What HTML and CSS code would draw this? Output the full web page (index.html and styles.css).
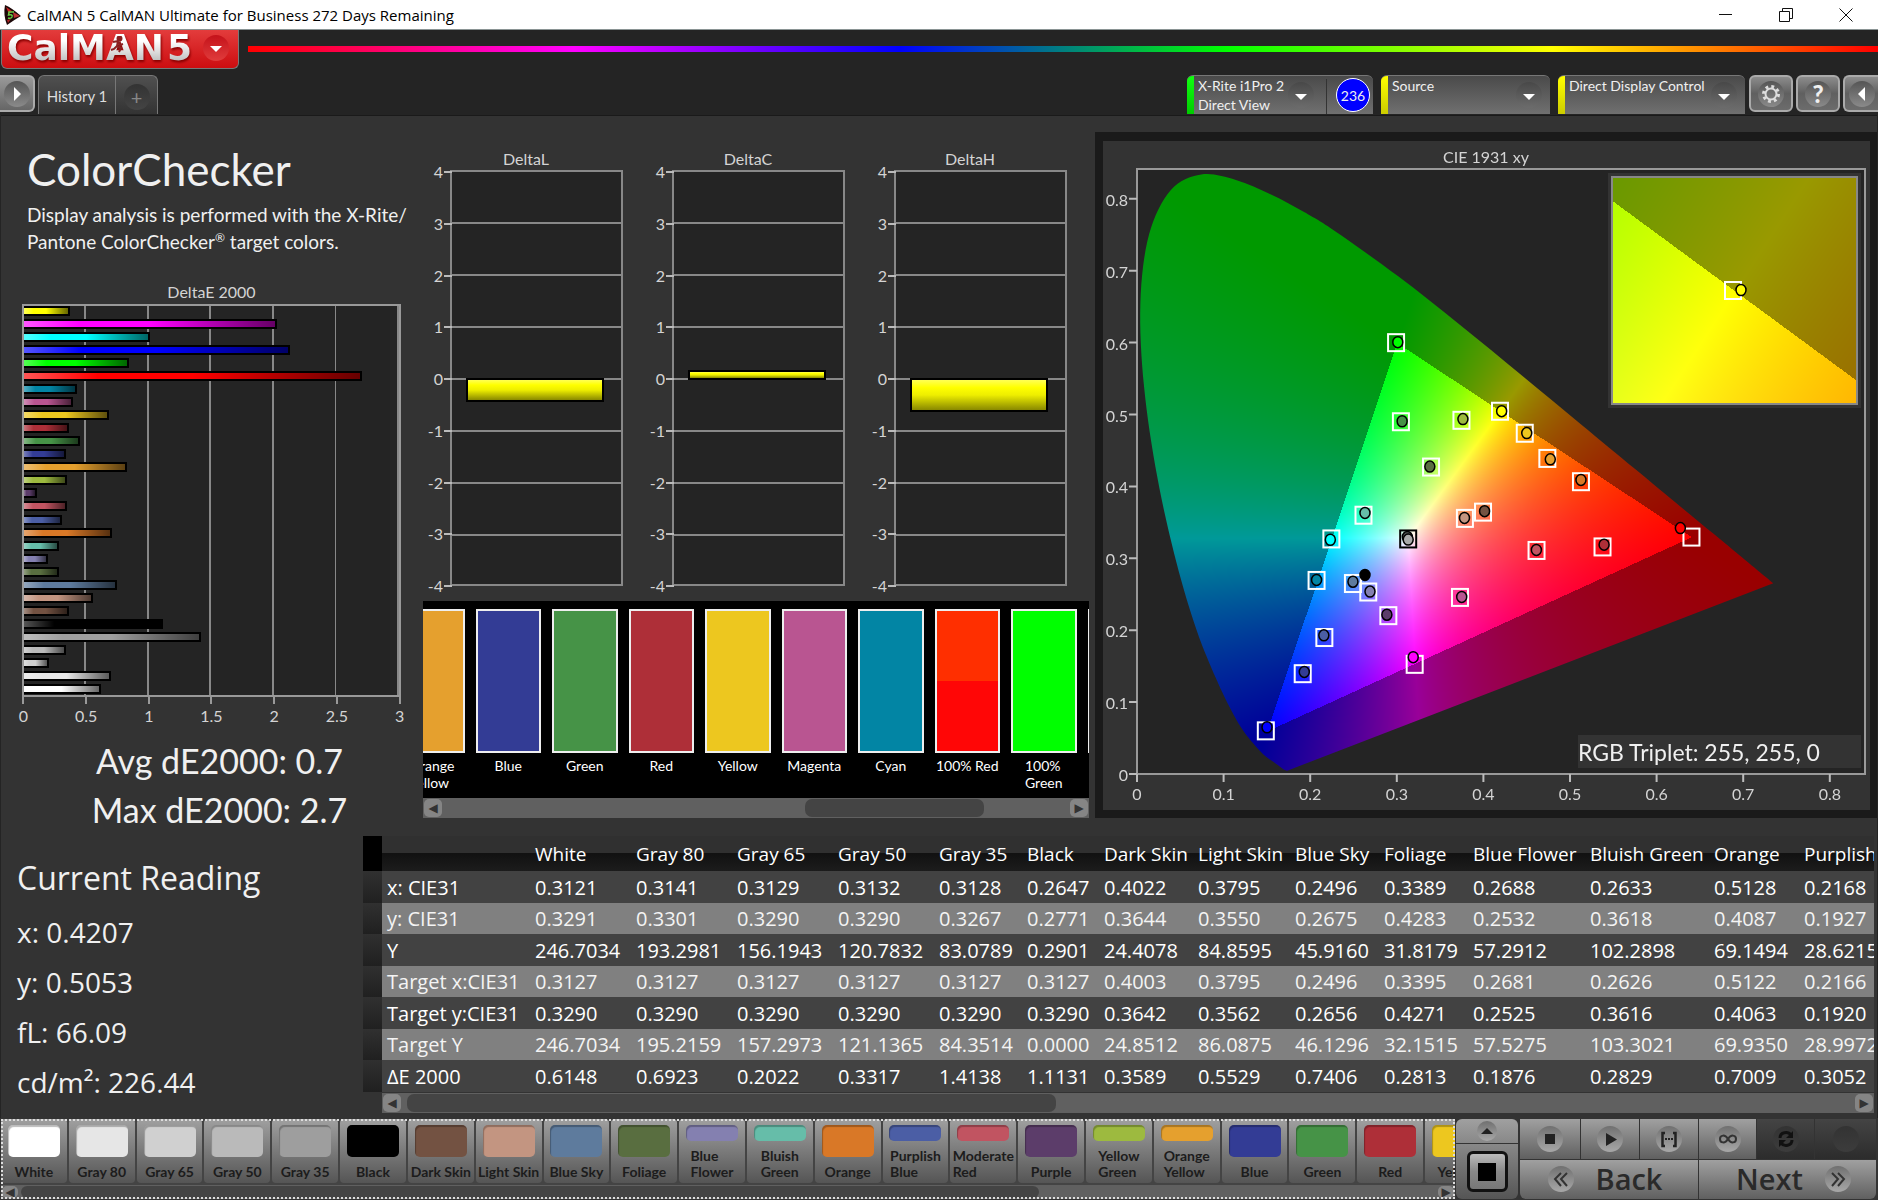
FILE: index.html
```html
<!DOCTYPE html>
<html lang="en">
<head>
<meta charset="utf-8">
<title>CalMAN 5</title>
<link rel="stylesheet" href="styles.css">
</head>
<body>
<div class="titlebar">
  <svg class="app-icon" viewBox="0 0 20 20" aria-hidden="true"><path d="M2 0Q9 3 18 11Q11 15 4 20Q0 10 2 0Z" fill="#1c0808"/><path d="M3 2L9 6L6 9Z" fill="#c22"/><path d="M10 7L17 11L11 13Z" fill="#b33"/><path d="M4 15L8 14L5 18Z" fill="#a22"/><path d="M11 7H6L5.500 10Q10 9 9 12Q8 14 5 13" stroke="#6c4" stroke-width="1.500" fill="none"/></svg>
  <span class="app-title">CalMAN 5 CalMAN Ultimate for Business 272 Days Remaining</span>
  <div class="win-buttons">
    <button aria-label="Minimize"><svg viewBox="0 0 14 14"><path d="M0 6.500H13" /></svg></button>
    <button aria-label="Restore"><svg viewBox="0 0 14 14"><path d="M.5 3.500H10.500V13.500H.5ZM3.500 3.500V.5H13.500V10.500H10.500"/></svg></button>
    <button aria-label="Close"><svg viewBox="0 0 14 14"><path d="M.5 .5L13.500 13.500M13.500 .5L.5 13.500"/></svg></button>
  </div>
</div>

<header>
  <div class="brand-row">
    <button class="logo"><span class="logo-text">CalMAN<svg class="runner" viewBox="0 0 14 18" aria-hidden="true"><circle cx="9.500" cy="2.500" r="2"/><path d="M3 6L8 5L7 10L11 12L9 16M7 10L4 13L1 14M8 6L10 9L13 8"/></svg></span><span class="logo-text">5</span><span class="orb red"><svg viewBox="0 0 26 26"><path d="M7 11H19L13 17Z"/></svg></span></button>
    <div class="rainbow"></div>
  </div>
  <div class="tab-row">
    <button class="square edge-left" aria-label="Open panel"><span class="orb"><svg viewBox="0 0 26 26"><path d="M10 6L17 13L10 20Z"/></svg></span></button>
    <div class="history"><button class="tab">History 1</button><button class="tab add" aria-label="Add history"><span class="orb dark">+</span></button></div>
    <div class="devices">
      <button class="device meter"><i class="flag green"></i><span>X-Rite i1Pro 2<br>Direct View</span><span class="orb dim"><svg viewBox="0 0 26 26"><path d="M7 12H19L13 18Z"/></svg></span><i class="rule"></i><b class="count">236</b></button>
      <button class="device source"><i class="flag"></i><span>Source</span><span class="orb dim"><svg viewBox="0 0 26 26"><path d="M7 12H19L13 18Z"/></svg></span></button>
      <button class="device display"><i class="flag"></i><span>Direct Display Control</span><span class="orb dim"><svg viewBox="0 0 26 26"><path d="M7 12H19L13 18Z"/></svg></span></button>
      <div class="tools">
        <button class="square" aria-label="Settings"><span class="orb"><svg viewBox="0 0 26 26"><g fill="none" stroke="#ddd"><circle cx="13" cy="13" r="5.500" stroke-width="2"/><circle cx="13" cy="13" r="7.500" stroke-width="3" stroke-dasharray="2.900 3"/></g></svg></span></button>
        <button class="square help" aria-label="Help"><span class="orb">?</span></button>
        <button class="square edge-right" aria-label="Collapse"><span class="orb"><svg viewBox="0 0 26 26"><path d="M16 6L9 13L16 20Z"/></svg></span></button>
      </div>
    </div>
  </div>
</header>

<main>
  <div class="analysis">
    <section class="summary">
      <h1>ColorChecker</h1>
      <p class="about">Display analysis is performed with the X-Rite/<br>Pantone ColorChecker<sup>®</sup> target colors.</p>
      <h2>DeltaE 2000</h2>
      <div class="de-plot" id="de-plot"></div>
      <div class="de-axis"><span>0</span><span>0.5</span><span>1</span><span>1.5</span><span>2</span><span>2.5</span><span>3</span></div>
      <p class="stat">Avg dE2000: 0.7</p>
      <p class="stat">Max dE2000: 2.7</p>
    </section>
    <section class="middle">
      <div class="deltas" id="deltas"></div>
      <div class="strip">
        <div class="strip-view"><div class="strip-items" id="strip"></div></div>
        <div class="scroll tall"><button aria-label="Scroll left">◀</button><div class="track"><i style="margin-left:58%;width:29%"></i></div><button aria-label="Scroll right">▶</button></div>
      </div>
    </section>
    <section class="cie-frame">
      <div class="cie">
        <canvas id="gamut" width="728" height="605"></canvas>
        <canvas id="inset" width="245" height="227"></canvas>
        <svg id="cie-svg" viewBox="0 0 767 669"></svg>
      </div>
    </section>
  </div>

  <div class="readings">
    <section class="current">
      <h2>Current Reading</h2>
      <p>x: 0.4207</p><p>y: 0.5053</p><p>fL: 66.09</p><p>cd/m²: 226.44</p>
    </section>
    <section class="grid-wrap">
      <div class="grid-view"><table id="grid"></table></div>
      <div class="scroll tall grid-scroll"><button aria-label="Scroll left">◀</button><div class="track"><i style="width:45%"></i></div><button aria-label="Scroll right">▶</button></div>
    </section>
  </div>
</main>

<footer>
  <div class="palette">
    <div class="palette-view"><div class="palette-items" id="palette"></div></div>
    <div class="scroll"><button aria-label="Scroll left">◀</button><div class="track"><i style="width:72%"></i></div><button aria-label="Scroll right">▶</button></div>
  </div>
  <div class="window-mode">
    <button class="up" aria-label="Expand"><span class="orb small"><svg viewBox="0 0 20 20"><path d="M4 13L10 7L16 13Z"/></svg></span></button>
    <button class="pattern" aria-label="Pattern window"><span class="frame"><i></i></span></button>
  </div>
  <div class="transport">
    <button aria-label="Stop"><span class="orb"><svg viewBox="0 0 26 26"><path d="M8 8H18V18H8Z"/></svg></span></button>
    <button aria-label="Play"><span class="orb"><svg viewBox="0 0 26 26"><path d="M9 7L20 13.500L9 20Z"/></svg></span></button>
    <button aria-label="Range"><span class="orb"><svg viewBox="0 0 26 26"><path d="M9 7H6.500V20H9M17 7H19.500V20H17" fill="none" stroke="#222" stroke-width="2.500"/><path d="M9 12h2v2h-2zM12 12h2v2h-2zM15 12h2v2h-2z"/></svg></span></button>
    <button aria-label="Continuous"><span class="orb"><svg viewBox="0 0 26 26"><path d="M13 13C10 8 5 9 5 13S10 18 13 13S21 9 21 13S16 18 13 13Z" fill="none" stroke="#333" stroke-width="2"/></svg></span></button>
    <button class="off" aria-label="Repeat"><span class="orb"><svg viewBox="0 0 26 26"><path d="M7 12C7 6 15 5 18 9M19 14C19 20 11 21 8 17" fill="none" stroke="#111" stroke-width="3"/><path d="M20 5V12H13ZM6 21V14H13Z" fill="#111"/></svg></span></button>
    <button class="off" aria-label="Unused"><span class="orb"></span></button>
    <button class="step back"><span class="orb"><svg viewBox="0 0 26 26"><path d="M13 7L7 13L13 20M19 7L13 13L19 20" fill="none" stroke="#333" stroke-width="2"/></svg></span>Back</button>
    <button class="step next">Next<span class="orb"><svg viewBox="0 0 26 26"><path d="M7 7L13 13L7 20M13 7L19 13L13 20" fill="none" stroke="#333" stroke-width="2"/></svg></span></button>
  </div>
</footer>
<script src="app.js"></script>
</body>
</html>
```
FILE: styles.css
```css
* { box-sizing: border-box; }
body { margin: 0; min-height: 100vh; display: flex; flex-direction: column; background: #242424; color: #f0f0f0; font: 16px Lato, sans-serif; overflow-x: hidden; }
button { margin: 0; padding: 0; border: 0; background: none; color: inherit; font: inherit; }
h1, h2, p { margin: 0; font-weight: 400; }
svg { display: block; }

.titlebar { height: 30px; display: flex; align-items: center; background: #fff; border-bottom: 1px solid #8a9494; color: #000; font: 15px "Open Sans", sans-serif; }
.app-icon { width: 20px; height: 20px; margin: 0 4px 0 3px; }
.app-title { flex: 1; line-height: 30px; white-space: nowrap; }
.win-buttons { display: flex; gap: 46px; padding-right: 25px; }
.win-buttons svg { width: 14px; height: 14px; fill: none; stroke: #111; }

.brand-row { display: flex; height: 45px; align-items: flex-start; gap: 9px; }
.logo { display: flex; align-items: center; width: 238px; height: 39px; margin-left: 1px; padding: 0 9px 2px 5px; border: 1px solid #777; border-top: 0; border-radius: 0 0 6px 6px; background: linear-gradient(#e33c3c, #cc0d10); }
.logo-text { position: relative; font: bold 36px/36px "DejaVu Sans", sans-serif; background: linear-gradient(#fff 30%, #bbb 90%); background-clip: text; color: transparent; filter: drop-shadow(1px 2px 1px #800); }
.logo-text + .logo-text { margin-left: 3px; }
.runner { position: absolute; left: 103px; top: 6px; width: 14px; height: 18px; fill: #8a2020; stroke: #8a2020; stroke-width: 2px; }
.runner path { fill: none; }
.orb { display: flex; align-items: center; justify-content: center; flex: none; width: 26px; height: 26px; border-radius: 50%; background: linear-gradient(#555, #8a8a8a); }
.orb svg { width: 100%; height: 100%; fill: #fff; }
.orb.red { margin-left: auto; background: linear-gradient(#c4121a, #e03c3c); }
.orb.dim { background: linear-gradient(#484848, #6c6c6c); }
.orb.dark { background: linear-gradient(#333, #444); color: #888; font-size: 20px; }
.rainbow { flex: 1; height: 6px; margin-top: 16px; background: linear-gradient(90deg, #f00, #f0f, #00f, #0f0, #ff0, #f00); }

.tab-row { display: flex; height: 40px; align-items: flex-start; }
.square { display: flex; align-items: center; justify-content: center; width: 44px; height: 37px; border: 2px solid #aaa; border-radius: 6px; background: linear-gradient(#8c8c8c, #606060 50%, #6c6c6c); }
.edge-left { width: 35px; border-left: 0; border-radius: 0 6px 6px 0; background: linear-gradient(#999, #666); }
.edge-right { width: 35px; border-right: 0; border-radius: 6px 0 0 6px; }
.help { font-size: 24px; font-weight: 900; }
.history { display: flex; height: 39px; margin-left: 3px; border: 1px solid #777; border-bottom: 0; border-radius: 6px 6px 0 0; background: linear-gradient(#505050, #333); }
.tab { width: 76px; padding-top: 2px; font-size: 15px; color: #ddd; }
.tab.add { display: flex; justify-content: center; width: 42px; padding-top: 8px; border-left: 1px solid #777; }
.devices { display: flex; margin-left: auto; gap: 8px; }
.device { display: flex; height: 39px; border-radius: 6px 6px 0 0; overflow: hidden; background: linear-gradient(#4a4a4a, #707070); border-top: 1px solid #777; text-align: left; font-size: 14px; line-height: 19px; }
.device > span:not(.orb) { flex: 1; white-space: nowrap; padding-left: 4px; }
.device .orb { margin: 6px 8px 0 0; }
.meter { width: 186px; }
.source { width: 169px; }
.display { width: 187px; }
.flag { width: 7px; background: linear-gradient(#ff0, #cc0); }
.flag.green { background: linear-gradient(#1f1, #0c0); }
.meter .orb { margin-right: 12px; }
.rule { width: 1px; height: 36px; margin-top: 3px; background: #333; }
.count { display: flex; align-items: center; justify-content: center; width: 34px; height: 34px; margin: 2px 3px 0 9px; border: 1px solid #fff; border-radius: 50%; background: #00f; font: 14px Lato, sans-serif; }
.tools { display: flex; gap: 3px; margin-left: -4px; }

main { flex: 1; margin: 0 1px; padding-bottom: 4px; background: #333; border-top: 1px solid #1a1a1a; }
.analysis { display: grid; grid-template-columns: 421fr 673fr 782fr; }
.summary h1 { padding: 23px 0 0 26px; font-size: 44px; line-height: 60px; }
.about { padding: 2px 0 0 26px; font-size: 19px; line-height: 27px; white-space: nowrap; }
.about sup { font-size: 12px; line-height: 1px; }
h2 { color: #d4d4d4; font-size: 16px; line-height: 20px; text-align: center; }
.summary h2 { margin-top: 27px; }
.de-plot { height: 393px; margin: 2px 21px 0 21px; padding-bottom: 1px; border: 2px solid #999; background: repeating-linear-gradient(90deg, #242424 0 calc(100% / 6 - 2px), #888 calc(100% / 6 - 2px) calc(100% / 6)); display: flex; flex-direction: column; justify-content: space-between; }
.de-bar { height: 10px; border: 2px solid #000; border-left: 0; background-image: linear-gradient(90deg, #fff5, #fff0 22%, #0000 50%, #0009); }
.de-axis { display: grid; grid-template-columns: repeat(7, 1fr); margin: 0 -9px; color: #d4d4d4; text-align: center; line-height: 24px; }
.de-axis span::before { content: ""; display: block; width: 2px; height: 7px; margin: 0 auto; background: #999; }
.stat { padding-left: 16px; font-size: 34px; line-height: 49px; text-align: center; }
.de-axis + .stat { margin-top: 8px; }

.middle { padding: 33px 6px 0 1px; }
.deltas { display: grid; grid-template-columns: repeat(3, 1fr); }
.delta { padding: 0 22px 0 27px; }
.delta h2 { margin: 0 25px 1px 0; white-space: nowrap; padding-left: 4px; }
.delta-plot { position: relative; height: 416px; border: 2px solid #888; background: repeating-linear-gradient(#242424 0 50px, #888 50px 52px); }
.delta-plot ol { position: absolute; right: 100%; top: -10px; bottom: -12px; display: flex; flex-direction: column; justify-content: space-between; margin: 0; padding: 0; list-style: none; line-height: 20px; text-align: right; color: #d4d4d4; white-space: nowrap; }
.delta-plot li { display: flex; align-items: center; justify-content: flex-end; gap: 1px; }
.delta-plot li::after { content: ""; width: 8px; height: 2px; background: #bbb; }
.delta-bar { position: absolute; left: 8%; right: 10%; border: 2px solid #000; background: linear-gradient(#ff5, #ff0 25%, #ee0 50%, #880); }
.strip { margin-top: 15px; }
.strip-view { height: 197px; overflow: hidden; background: #000; }
.strip-items { display: flex; gap: 11px; width: calc(100% + 88px); margin-left: -24px; padding-top: 8px; }
.patch { flex: 1 1 0; display: flex; flex-direction: column; align-items: center; font-size: 14px; line-height: 17px; color: #fff; }
.patch i { width: 100%; height: 144px; margin-bottom: 4px; border: 2px solid #eee; }
.scroll { display: flex; align-items: stretch; height: 14px; padding: 1px; background: #606060; }
.scroll.tall { height: 20px; }
.scroll button { width: 16px; border-radius: 5px; background: #858585; color: #333; font: 12px/10px "DejaVu Sans", sans-serif; }
.scroll .track { flex: 1; display: flex; padding: 0 3px; }
.scroll i { border-radius: 7px; background: #444; }
.scroll.tall button { width: 18px; }
.scroll.tall .track { padding: 0 6px; }

.cie-frame { margin: 16px 0 0; padding: 9px 7px 8px 8px; background: #1a1a1a; align-self: start; }
.cie { position: relative; aspect-ratio: 767 / 669; background: #333; }
.cie canvas, .cie svg { position: absolute; }
.cie svg { left: 0; top: 0; width: 100%; height: 100%; }
#gamut { left: 4.430%; top: 4.190%; width: 94.920%; height: 90.430%; background: #242424; }
#inset { left: 66.360%; top: 5.380%; width: 31.940%; height: 33.930%; outline: 4px solid #333; }
.cie text { fill: #d4d4d4; font: 16px Lato, sans-serif; }
.cie .triplet { fill: #f0f0f0; font-size: 23px; }

.readings { display: grid; grid-template-columns: 362px minmax(0, 1fr); margin-top: 2px; }
.current { padding: 17px 0 0 16px; font: 28px "Open Sans", sans-serif; }
.current h2 { font-size: 32px; line-height: 50px; color: #f0f0f0; text-align: left; }
.current p { line-height: 50px; }
.current h2 + p { margin-top: 4px; }
.grid-wrap { padding-right: 3px; }
.grid-view { overflow: hidden; }
table { border-collapse: collapse; table-layout: fixed; width: 1619px; font: 20px "Open Sans", sans-serif; color: #fff; }
th, td { padding: 0 0 0 5px; text-align: left; font-weight: 400; white-space: nowrap; line-height: 31px; }
thead tr { height: 35px; background: linear-gradient(#303030 50%, #111 50%, #1c1c1c); font-size: 19px; }
thead th { padding-top: 2px; }
tbody tr { height: 32px; background: #424242; }
tbody tr:nth-child(even) { height: 31px; background: #808080; color: #f4f4f4; }
td.grip { background: linear-gradient(#303030, #202020); }
thead td.grip { background: #000; }
.grid-scroll { margin: 1px 0 0 19px; }

footer { display: flex; height: 82px; padding: 1px 2px 1px 1px; background: #333; }
.palette { flex: 1; min-width: 0; outline: 2px dotted #ddd; outline-offset: -2px; background: #444; display: flex; flex-direction: column; justify-content: space-between; }
.palette-view { overflow: hidden; }
.palette-items { display: flex; gap: 2px; width: calc(100% + 36px); }
.swatch { flex: 1 1 0; min-width: 0; height: 64px; display: flex; flex-direction: column; align-items: center; justify-content: space-between; padding: 6px 0 3px; border-radius: 4px; background: linear-gradient(#a0a0a0, #555); color: #1c1c1c; font: bold 14px/16px Lato, sans-serif; text-align: left; white-space: nowrap; }
.swatch i { width: 52px; height: 32px; border-radius: 5px; box-shadow: inset 1px 2px 1px #0004; }
.swatch i.short { height: 16px; }
.window-mode { width: 62px; margin: 0 2px 0 1px; display: flex; flex-direction: column; gap: 1px; }
.window-mode button { display: flex; align-items: center; justify-content: center; background: linear-gradient(#a0a0a0, #888); }
.up { height: 24px; border-radius: 6px 6px 0 0; }
.window-mode .pattern { flex: 1; border-radius: 0 0 6px 6px; background: linear-gradient(#888, #555); }
.small { width: 20px; height: 20px; }
.frame { display: flex; align-items: center; justify-content: center; width: 41px; height: 41px; border: 3px solid #111; border-radius: 6px; background: linear-gradient(#bbb, #888 50%, #777); }
.frame i { width: 18px; height: 18px; background: #000; }
.transport { width: 356px; display: grid; grid-template-columns: 60px 58px 58px 57px 57px 1fr; grid-template-rows: 1fr 1fr; gap: 1px; }
.transport button { display: flex; align-items: center; justify-content: center; background: linear-gradient(#a0a0a0, #606060); }
.transport .orb, .up .orb { background: linear-gradient(#707070, #a8a8a8); }
.transport .orb svg, .up svg { fill: #222; }
.transport .off { background: linear-gradient(#444, #2c2c2c); }
.transport .off .orb { background: linear-gradient(#333, #3c3c3c); }
.transport .step { grid-column: span 3; gap: 22px; color: #2a2a2a; font: 600 29px/38px "Open Sans", sans-serif; }
.transport .back { padding-right: 8px; border-radius: 0 0 0 6px; }
.transport .next { padding-left: 12px; border-radius: 0 0 6px 0; }
```
FILE: app.js
```js
const byId = id => document.getElementById(id);

// Patches in measuring order: name, colour, DeltaE
const patches = [
  ['White', '#ffffff', .615], ['Gray 80', '#e6e6e6', .692], ['Gray 65', '#d0d0d0', .202], ['Gray 50', '#bababa', .332],
  ['Gray 35', '#9e9e9e', 1.414], ['Black', '#000000', 1.113], ['Dark Skin', '#735242', .359], ['Light Skin', '#c39581', .553],
  ['Blue Sky', '#5e7b9d', .741], ['Foliage', '#596e40', .281], ['Blue<br>Flower', '#8480b0', .188], ['Bluish<br>Green', '#66bda9', .283],
  ['Orange', '#d97827', .701], ['Purplish<br>Blue', '#4b5ea5', .305], ['Moderate<br>Red', '#c15461', .345], ['Purple', '#5c3d6a', .1],
  ['Yellow<br>Green', '#9dba3f', .345], ['Orange<br>Yellow', '#e5a02e', .825], ['Blue', '#333c95', .333], ['Green', '#469347', .447],
  ['Red', '#ae2f38', .36], ['Yellow', '#edc71f', .68], ['Magenta', '#b95591', .395], ['Cyan', '#0285a4', .42],
  ['100% Red', '#ff0000', 2.7], ['100%<br>Green', '#00ff00', .84], ['100% Blue', '#0000ff', 2.13], ['100% Cyan', '#00ffff', 1.01],
  ['100% Magenta', '#ff00ff', 2.02], ['100% Yellow', '#ffff00', .37]
];

byId('de-plot').innerHTML = [...patches].reverse().map(([, c, v]) =>
  `<div class="de-bar" style="width:${v / 3 * 100}%;background-color:${c}"></div>`).join('');

byId('deltas').innerHTML = [['DeltaL', -.42], ['DeltaC', .16], ['DeltaH', -.62]].map(([name, v]) => {
  const top = v > 0 ? 50 - v * 12.5 : 50;
  return `<div class="delta"><h2>${name}</h2><div class="delta-plot"><ol>${[4, 3, 2, 1, 0, -1, -2, -3, -4].map(n => `<li>${n}</li>`).join('')}</ol>` +
    `<div class="delta-bar" style="top:${top}%;height:${Math.abs(v) * 12.5 + .5}%"></div></div></div>`;
}).join('');

byId('strip').innerHTML = patches.slice(17, 27).map(([n, c]) =>
  `<div class="patch"><i style="background:${n === '100% Red' ? 'linear-gradient(#ff2f00 50%,#ff0606 50%)' : c}"></i><span>${n === '100% Blue' ? '' : n}</span></div>`).join('');

byId('palette').innerHTML = patches.slice(0, 22).map(([n, c]) =>
  `<button class="swatch"><i class="${n.includes('<br>') ? 'short' : ''}" style="background-color:${c}"></i><span>${n}</span></button>`).join('');

// Readings table
const widths = [19, 148, 101, 101, 101, 101, 88, 77, 94, 97, 89, 89, 117, 124, 90, 183];
const head = ['', 'White', 'Gray 80', 'Gray 65', 'Gray 50', 'Gray 35', 'Black', 'Dark Skin', 'Light Skin', 'Blue Sky', 'Foliage', 'Blue Flower', 'Bluish Green', 'Orange', 'Purplish Blue'];
const rows = `x: CIE31|0.3121|0.3141|0.3129|0.3132|0.3128|0.2647|0.4022|0.3795|0.2496|0.3389|0.2688|0.2633|0.5128|0.2168
y: CIE31|0.3291|0.3301|0.3290|0.3290|0.3267|0.2771|0.3644|0.3550|0.2675|0.4283|0.2532|0.3618|0.4087|0.1927
Y|246.7034|193.2981|156.1943|120.7832|83.0789|0.2901|24.4078|84.8595|45.9160|31.8179|57.2912|102.2898|69.1494|28.6215
Target x:CIE31|0.3127|0.3127|0.3127|0.3127|0.3127|0.3127|0.4003|0.3795|0.2496|0.3395|0.2681|0.2626|0.5122|0.2166
Target y:CIE31|0.3290|0.3290|0.3290|0.3290|0.3290|0.3290|0.3642|0.3562|0.2656|0.4271|0.2525|0.3616|0.4063|0.1920
Target Y|246.7034|195.2159|157.2973|121.1365|84.3514|0.0000|24.8512|86.0875|46.1296|32.1515|57.5275|103.3021|69.9350|28.9972
ΔE 2000|0.6148|0.6923|0.2022|0.3317|1.4138|1.1131|0.3589|0.5529|0.7406|0.2813|0.1876|0.2829|0.7009|0.3052`.split('\n').map(r => r.split('|'));
byId('grid').innerHTML =
  `<colgroup>${widths.map(w => `<col style="width:${w}px">`).join('')}</colgroup>` +
  `<thead><tr><td class="grip"></td>${head.map(h => `<th scope="col">${h}</th>`).join('')}</tr></thead><tbody>` +
  rows.map(([h, ...cells]) => `<tr><td class="grip"></td><th scope="row">${h}</th>${cells.map(c => `<td>${c}</td>`).join('')}</tr>`).join('') + '</tbody>';

// Chromaticity diagram
const SX = 866, SY = 719;
const locus = [[.1741, .005], [.1714, .0051], [.1644, .0109], [.1566, .0177], [.144, .0297], [.1241, .0578], [.1096, .0868], [.0913, .1327],
  [.0687, .2007], [.0454, .295], [.0235, .4127], [.0082, .5384], [.0039, .6548], [.0139, .7502], [.0389, .812], [.0743, .8338], [.1142, .8262],
  [.1547, .8059], [.1929, .7816], [.2296, .7543], [.3016, .6923], [.3731, .6245], [.4441, .5547], [.5125, .4866], [.5752, .4242], [.627, .3725],
  [.6658, .334], [.6915, .3083], [.719, .2809], [.7347, .2653]];
function rgbAt(x, y) {
  const z = 1 - x - y;
  const lin = [3.2406 * x - 1.5372 * y - .4986 * z, -.9689 * x + 1.8758 * y + .0415 * z, .0557 * x - .204 * y + 1.057 * z];
  const dim = Math.min(...lin) < 0 ? .6 : 1;
  const top = Math.max(...lin);
  return lin.map(v => 255 * dim * Math.max(v, 0) / top);
}
function shade(canvas, x0, y0, x1, y1) {
  const { width: w, height: h } = canvas, ctx = canvas.getContext('2d'), img = ctx.createImageData(w, h);
  for (let j = 0; j < h; j++) for (let i = 0; i < w; i++) {
    const c = rgbAt(x0 + (x1 - x0) * i / w, y1 + (y0 - y1) * j / h), k = (j * w + i) * 4;
    img.data[k] = c[0]; img.data[k + 1] = c[1]; img.data[k + 2] = c[2]; img.data[k + 3] = 255;
  }
  ctx.putImageData(img, 0, 0);
  return ctx;
}
const gamut = byId('gamut');
const g = shade(gamut, 0, 0, 728 / SX, 605 / SY);
g.globalCompositeOperation = 'destination-in';
g.beginPath();
const pts = locus.map(([x, y]) => [x * SX, 605 - y * SY]);
g.moveTo(...pts[0]);
for (let i = 0; i < pts.length - 1; i++) {
  const a = pts[i - 1] || pts[i], b = pts[i], c = pts[i + 1], d = pts[i + 2] || c;
  g.bezierCurveTo(b[0] + (c[0] - a[0]) / 6, b[1] + (c[1] - a[1]) / 6, c[0] - (d[0] - b[0]) / 6, c[1] - (d[1] - b[1]) / 6, c[0], c[1]);
}
g.closePath();
g.fill();
shade(byId('inset'), .3943, .4803, .4443, .5303);

// target x, y, measured x, y, colour
const marks = [
  [.298, .602, .3, .602, '#00ff00'], [.3036, .492, .305, .492, '#469347'], [.3735, .494, .3752, .495, '#9dba3f'], [.418, .5066, .4199, .506, '#ffff00'],
  [.4466, .476, .4489, .4756, '#edc71f'], [.4727, .441, .4761, .439, '#e5a02e'], [.5115, .4086, .5115, .4104, '#d97827'], [.6391, .3316, .6263, .3434, '#ff0000'],
  [.3384, .429, .337, .429, '#596e40'], [.3984, .3663, .4002, .367, '#735242'], [.3775, .3576, .377, .3576, '#c39581'], [.2604, .362, .2621, .3645, '#66bda9'],
  [.2233, .329, .2221, .3272, '#00ffff'], [.4602, .313, .46, .313, '#c15461'], [.5364, .3179, .5382, .3204, '#ae2f38'], [.2062, .2713, .2062, .2713, '#0285a4'],
  [.2482, .267, .2482, .2688, '#5e7b9d'], [.2659, .2552, .2679, .2552, '#8480b0'], [.2891, .2223, .2874, .2229, '#5c3d6a'], [.3718, .2477, .3738, .2477, '#b95591'],
  [.2152, .1919, .2146, .1943, '#4b5ea5'], [.1902, .1416, .192, .1434, '#333c95'], [.3195, .1546, .3178, .1639, '#ff00ff'], [.1476, .0621, .149, .0664, '#0000ff']
];
const px = x => 35 + x * SX, py = y => 634 - y * SY;
const box = (x, y, c = '#fff') => `<rect x="${x - 8}" y="${y - 8}" width="16" height="17" fill="none" stroke="${c}" stroke-width="2"/>`;
const dot = (x, y, c) => `<ellipse cx="${x}" cy="${y}" rx="5" ry="5.500" fill="${c}" stroke="#000" stroke-width="1.500"/>`;
let s = '<text x="383" y="22" text-anchor="middle">CIE 1931 xy</text><rect x="34" y="28" width="728" height="605" fill="none" stroke="#999" stroke-width="2"/>';
for (let i = 0; i <= 8; i++) {
  const t = i ? '0.' + i : '0', x = 34 + i * SX / 10, y = 633 - i * SY / 10;
  s += `<path d="M${x} 633v8M34 ${y}h-8" stroke="#bbb" stroke-width="2"/><text x="${x}" y="659" text-anchor="middle">${t}</text><text x="25" y="${y + 7}" text-anchor="end">${t}</text>`;
}
s += marks.map(m => box(px(m[0]), py(m[1])) + dot(px(m[2]), py(m[3]), m[4])).join('');
s += dot(px(.2621), py(.2782), '#000') + box(px(.312), py(.329), '#000') + dot(px(.311), py(.331), '#555') + dot(px(.312), py(.3275), '#aaa');
s += '<rect x="509" y="36" width="245" height="227" fill="none" stroke="#888" stroke-width="2"/>' + box(630, 149) + dot(638, 149, '#ff0');
s += '<rect x="475" y="594" width="283" height="33" fill="#333"/><text class="triplet" x="475" y="620">RGB Triplet: 255, 255, 0</text>';
byId('cie-svg').innerHTML = s;
```
